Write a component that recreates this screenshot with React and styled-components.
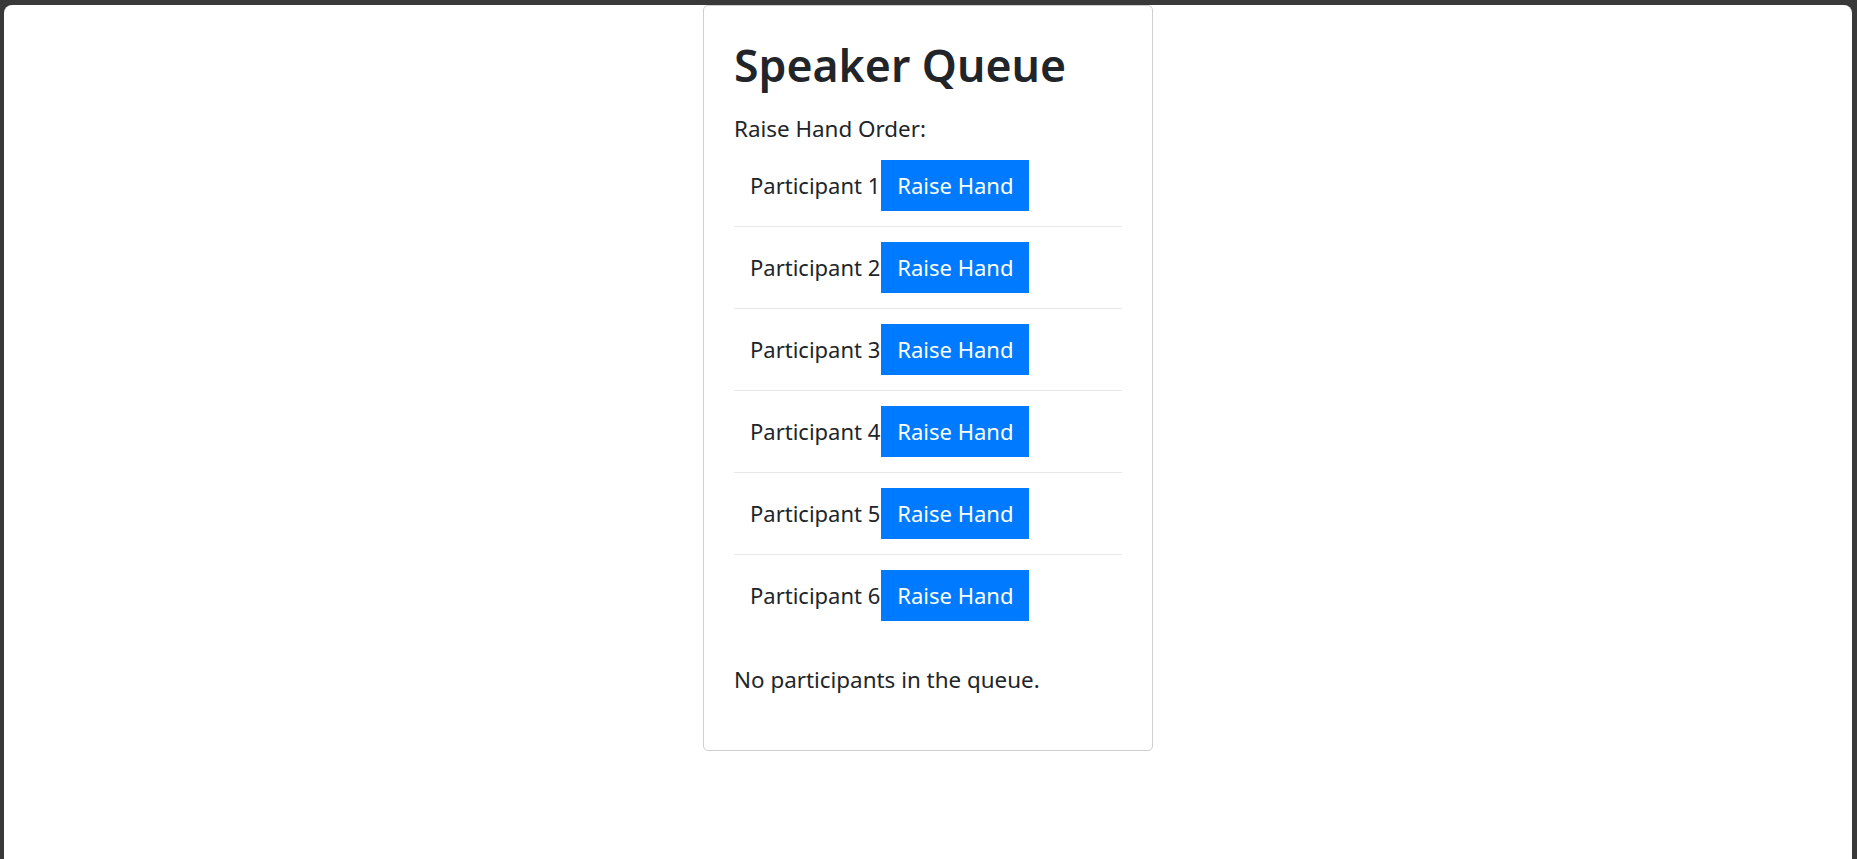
import React from 'react';
import styled, { createGlobalStyle } from 'styled-components';

const GlobalStyle = createGlobalStyle`
  html, body {
    margin: 0;
    padding: 0;
    background: #393939;
  }
  body {
    font-family: "Noto Sans", "Open Sans", sans-serif;
    color: #212529;
  }
  * { box-sizing: border-box; }
`;

const Window = styled.div`
  margin: 5px 5px 0 4px;
  min-height: calc(100vh - 5px);
  background: #ffffff;
  border-radius: 8px 8px 0 0;
  display: flex;
  justify-content: center;
  align-items: flex-start;
`;

const Card = styled.div`
  width: 450px;
  border: 1px solid #cfcfcf;
  border-radius: 5px;
  padding: 30px;
  background: #fff;
`;

const Title = styled.h1`
  margin: 2px 0 21px;
  font-size: 44.6px;
  font-weight: 600;
  line-height: 53px;
`;

const Text = styled.p`
  margin: 0 0 ${(p) => p.$mb || 0}px;
  font-size: 22.4px;
  line-height: 33px;
`;

const List = styled.ul`
  list-style: none;
  margin: 0 0 27px;
  padding: 0;
`;

const Row = styled.li`
  display: flex;
  align-items: center;
  padding: 15px 16px;
  font-size: 22px;
  line-height: 33px;
  border-bottom: 1px solid #e8e8e8;
  &:last-child {
    border-bottom: none;
  }
`;

const Button = styled.button`
  font-family: inherit;
  font-size: 22px;
  line-height: 33px;
  color: #fff;
  background: #007bff;
  border: none;
  border-radius: 0;
  padding: 9px 16px;
  margin: 0 0 0 1px;
  cursor: pointer;
`;

const participants = [1, 2, 3, 4, 5, 6].map((n) => `Participant ${n}`);

export default function App() {
  return (
    <>
      <GlobalStyle />
      <Window>
        <Card>
          <Title>Speaker Queue</Title>
          <Text>Raise Hand Order:</Text>
          <List>
            {participants.map((p) => (
              <Row key={p}>
                {p}
                <Button>Raise Hand</Button>
              </Row>
            ))}
          </List>
          <Text $mb={24}>No participants in the queue.</Text>
        </Card>
      </Window>
    </>
  );
}
